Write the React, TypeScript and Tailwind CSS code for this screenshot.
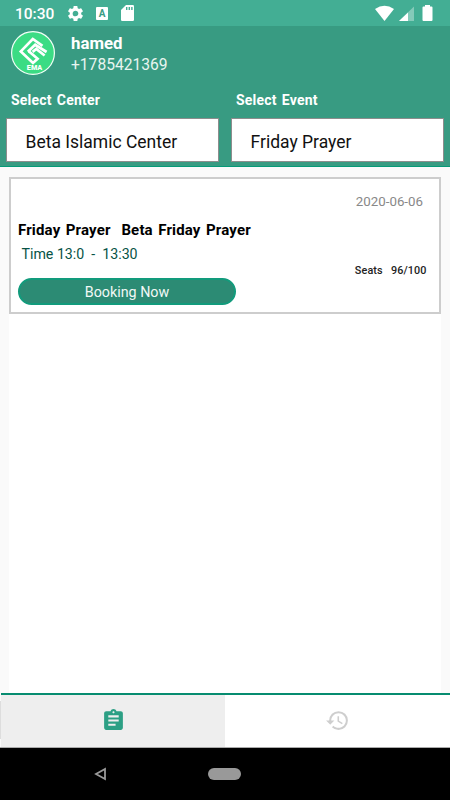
import type { ReactNode } from "react";

function Icon({ className, children }: { className: string; children: ReactNode }) {
  return (
    <svg viewBox="0 0 24 24" fill="currentColor" className={`block shrink-0 ${className}`}>
      {children}
    </svg>
  );
}

function StatusBar() {
  return (
    <div className="flex h-[26px] items-center bg-[#43ae94] pl-[15px] pr-[17px] text-white">
      <span className="w-[51px] pt-px text-[15.5px] font-medium leading-[26px]">10:30</span>
      <Icon className="mt-px h-[19px] w-[19px]">
        <path d="M19.14 12.94c.04-.3.06-.61.06-.94 0-.32-.02-.64-.07-.94l2.03-1.58a.49.49 0 0 0 .12-.61l-1.92-3.32a.488.488 0 0 0-.59-.22l-2.39.96c-.5-.38-1.03-.7-1.62-.94l-.36-2.54a.484.484 0 0 0-.48-.41h-3.84c-.24 0-.43.17-.47.41l-.36 2.54c-.59.24-1.13.57-1.62.94l-2.39-.96c-.22-.08-.47 0-.59.22L2.74 8.87c-.12.21-.08.47.12.61l2.03 1.58c-.05.3-.09.63-.09.94s.02.64.07.94l-2.03 1.58a.49.49 0 0 0-.12.61l1.92 3.32c.12.22.37.29.59.22l2.39-.96c.5.38 1.03.7 1.62.94l.36 2.54c.05.24.24.41.48.41h3.84c.24 0 .44-.17.47-.41l.36-2.54c.59-.24 1.13-.56 1.62-.94l2.39.96c.22.08.47 0 .59-.22l1.92-3.32a.49.49 0 0 0-.12-.61l-2.01-1.58zM12 15.6A3.61 3.61 0 0 1 8.4 12c0-1.98 1.62-3.6 3.6-3.6s3.6 1.62 3.6 3.6-1.62 3.6-3.6 3.6z" />
      </Icon>
      <span className="ml-[11px] mt-px flex h-[13px] w-[12px] shrink-0 items-center justify-center rounded-[1px] bg-white text-[10px] font-bold leading-none text-[#3b9c85]">
        A
      </span>
      <svg viewBox="0 0 13 16" className="ml-[13px] block h-4 w-[13px] shrink-0">
        <path d="M5 0h6.8Q13 0 13 1.2v13.6q0 1.2-1.2 1.2H1.2Q0 16 0 14.8V5z" fill="white" />
        <path d="M5 2h1.4v3H5zM7.6 2H9v3H7.6zM10.2 2h1.4v3h-1.4z" fill="#43ae94" />
      </svg>
      <svg viewBox="0 0 60 18" className="ml-auto block h-[18px] w-[60px] shrink-0">
        <path d="M2 5Q11.5 -1.5 21 5L11.5 17z" fill="white" />
        <path d="M41 2.5v14.5H26z" fill="white" fillOpacity=".35" />
        <path d="M35 8.500v8.500h-9z" fill="white" />
        <path d="M52 1h5v1.5h1.5q1 0 1 1V16q0 1-1 1h-8q-1 0-1-1V3.5q0-1 1-1H52z" fill="white" />
      </svg>
    </div>
  );
}

function Logo() {
  return (
    <svg viewBox="0 0 44 44" className="block h-11 w-11 shrink-0">
      <circle cx="22" cy="22" r="21.4" fill="#3bdc84" stroke="#f3fff8" strokeWidth="1.2" />
      <g fill="none" stroke="white" strokeWidth="2.7">
        <path d="M31.500 14.800 21.800 8 9.800 20.400 22 32 26.600 27.800 17.800 20.300" />
        <path d="M16.800 20.800 24.200 13.800 35.600 21M21.600 20.800 25.300 18 33.600 24.500" />
      </g>
      <text x="23.5" y="39" textAnchor="middle" fontSize="7.200" fontWeight="900" fill="white" className="font-['Roboto']">
        EMA
      </text>
    </svg>
  );
}

function SelectField({ label, value }: { label: string; value: string }) {
  return (
    <div className="w-[225px] px-[6px]">
      <div className="h-[26px] pl-[5px] text-[14px] font-bold leading-[16px] tracking-[0.2px] text-white [word-spacing:1.5px]">{label}</div>
      <div className="h-[44px] w-[213px] border-[1.5px] border-[#8d8d8d] bg-white pl-[18.5px] text-[17.5px] leading-[46px] text-[#111]">{value}</div>
    </div>
  );
}

function BookingCard() {
  return (
    <div className="h-[137px] border-2 border-[#cdcdcd] px-[7px]">
      <div className="pr-[9px] pt-[15px] text-right text-[13.3px] leading-[16px] text-[#888]">2020-06-06</div>
      <div className="mt-[10px] whitespace-pre text-[15px] font-bold leading-[20px] tracking-[0.16px] text-black [word-spacing:1.5px]">Friday Prayer  Beta Friday Prayer</div>
      <div className="mt-[4px] flex h-[46px] justify-between">
        <span className="whitespace-pre pl-[3.5px] text-[14.2px] leading-[20px] text-[#075346]">Time 13:0  -  13:30</span>
        <span className="mt-[18px] whitespace-pre pr-[5.5px] text-[10.8px] font-medium leading-[18px] tracking-[0.1px] text-[#222]">Seats   96/100</span>
      </div>
      <button className="-mt-[12px] block h-[27px] w-[218px] rounded-full border-2 border-[#129b7c] bg-[#2c8b74] text-center text-[14.3px] leading-[25px] text-[#f2f8f6]">
        Booking Now
      </button>
    </div>
  );
}

function TabBar() {
  return (
    <div className="flex h-[54px]">
      <div className="mb-2 mt-2 w-px bg-[#ddd]" />
      <div className="flex flex-1 border-t-2 border-[#078c70]">
        <div className="flex w-[224px] justify-center bg-[#eee] pt-[12.5px]">
          <Icon className="h-[25px] w-[25px] text-[#2c9f84]">
            <path d="M19 3h-4.180C14.400 1.840 13.300 1 12 1c-1.300 0-2.400.84-2.820 2H5c-1.100 0-2 .9-2 2v14c0 1.100.9 2 2 2h14c1.100 0 2-.9 2-2V5c0-1.100-.9-2-2-2zm-7 0c.55 0 1 .45 1 1s-.45 1-1 1-1-.45-1-1 .45-1 1-1zm2 14H7v-2h7v2zm3-4H7v-2h10v2zm0-4H7V7h10v2z" />
          </Icon>
        </div>
        <div className="flex flex-1 justify-center bg-white pt-[12.5px]">
          <Icon className="h-[25px] w-[25px] text-[#cecece]">
            <path d="M13 3a9 9 0 0 0-9 9H1l3.890 3.890.07.14L9 12H6c0-3.870 3.130-7 7-7s7 3.130 7 7-3.130 7-7 7c-1.930 0-3.680-.79-4.940-2.060l-1.420 1.420A8.954 8.954 0 0 0 13 21a9 9 0 0 0 0-18zm-1 5v5l4.280 2.540.72-1.210-3.500-2.080V8H12z" />
          </Icon>
        </div>
      </div>
    </div>
  );
}

export default function App() {
  return (
    <div className="flex h-[800px] w-[450px] flex-col overflow-hidden bg-[#fafafa] font-['Roboto',sans-serif]">
      <StatusBar />
      <header className="flex h-[141px] flex-col border-b border-[#059a78] bg-[#389b82]">
        <div className="flex pl-[11px] pt-[5px] text-white">
          <Logo />
          <div className="ml-[16px] pt-[2px]">
            <div className="text-[16.8px] font-bold leading-[21px]">hamed</div>
            <div className="text-[15.6px] leading-[22px] text-[#e8f5f0]">+1785421369</div>
          </div>
        </div>
        <div className="mt-[16px] flex">
          <SelectField label="Select Center" value="Beta Islamic Center" />
          <SelectField label="Select Event" value="Friday Prayer" />
        </div>
      </header>
      <main className="mx-[9px] mt-[10px] h-[516px] bg-white">
        <BookingCard />
      </main>
      <TabBar />
      <nav className="flex flex-1 items-center border-t border-[#aaa] bg-black pl-[94px]">
        <svg viewBox="0 0 13 14" className="block h-[14px] w-[13px]">
          <path d="M11 2v10L2 7z" fill="none" stroke="#999" strokeWidth="1.8" />
        </svg>
        <div className="ml-[101px] h-[12px] w-[33px] rounded-full bg-[#999]" />
      </nav>
    </div>
  );
}
